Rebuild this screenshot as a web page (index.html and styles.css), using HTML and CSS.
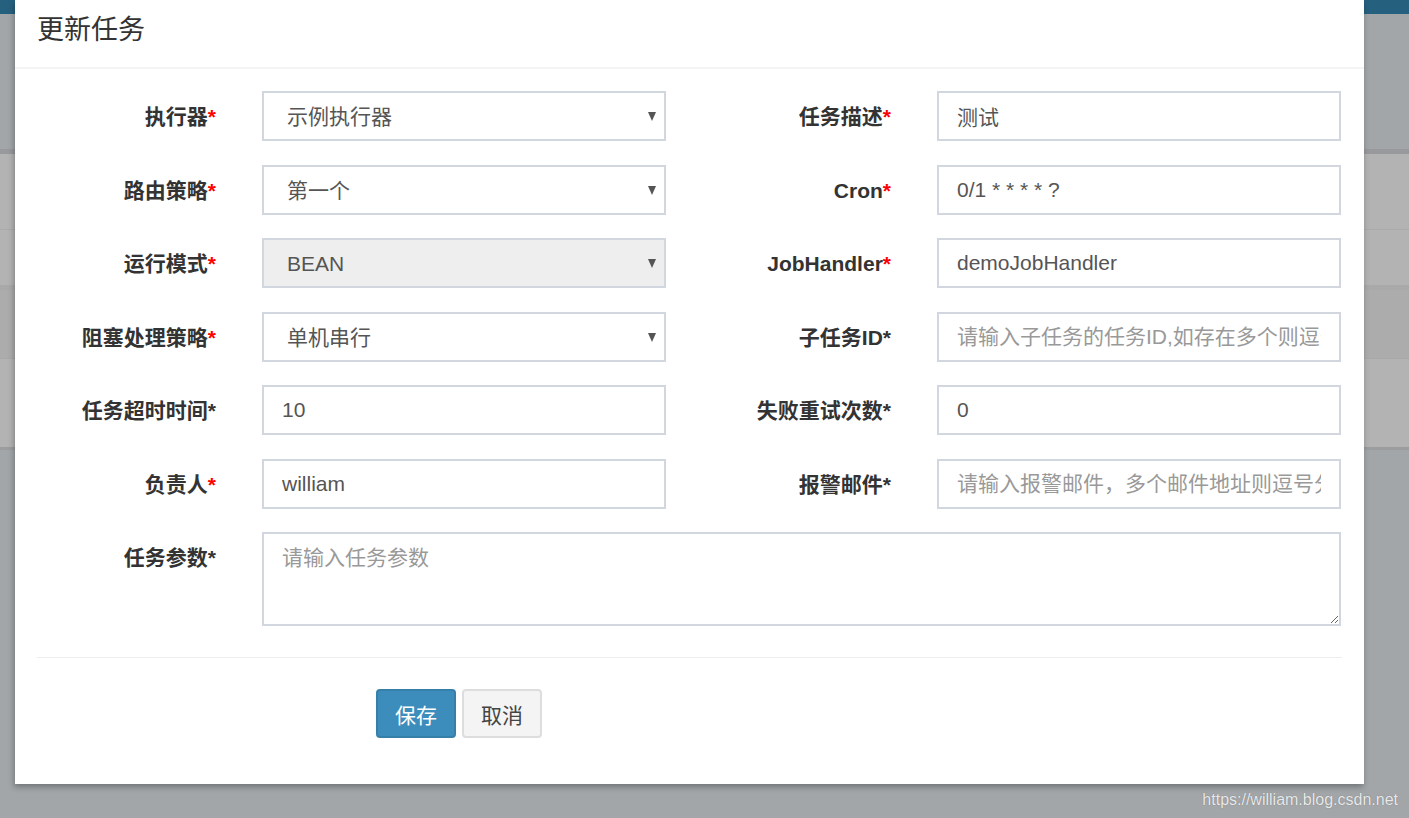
FILE: index.html
```html
<!DOCTYPE html>
<html lang="zh-CN">
<head>
<meta charset="utf-8">
<title>更新任务</title>
<link rel="stylesheet" href="styles.css">
</head>
<body>
<div class="page">
  <div class="topbar"></div>
  <div class="band"></div>
  <div class="thead"></div>
  <div class="trow r1"></div>
  <div class="trow r2"></div>
  <div class="trow r3"></div>
  <div class="trow r4"></div>
  <div class="tfoot"></div>
</div>

<div class="modal">
  <div class="modal-header">
    <h4 class="modal-title">更新任务</h4>
  </div>
  <div class="modal-body">
    <form class="form-grid">
      <label class="lbl">执行器<span class="req">*</span></label>
      <div class="sel-wrap">
        <select class="ctl sel"><option>示例执行器</option></select>
        <span class="caret"></span>
      </div>
      <label class="lbl">任务描述<span class="req">*</span></label>
      <input class="ctl" type="text" value="测试">

      <label class="lbl">路由策略<span class="req">*</span></label>
      <div class="sel-wrap">
        <select class="ctl sel"><option>第一个</option></select>
        <span class="caret"></span>
      </div>
      <label class="lbl">Cron<span class="req">*</span></label>
      <input class="ctl" type="text" value="0/1 * * * * ?">

      <label class="lbl">运行模式<span class="req">*</span></label>
      <div class="sel-wrap">
        <select class="ctl sel" disabled><option>BEAN</option></select>
        <span class="caret"></span>
      </div>
      <label class="lbl">JobHandler<span class="req">*</span></label>
      <input class="ctl" type="text" value="demoJobHandler">

      <label class="lbl">阻塞处理策略<span class="req">*</span></label>
      <div class="sel-wrap">
        <select class="ctl sel"><option>单机串行</option></select>
        <span class="caret"></span>
      </div>
      <label class="lbl">子任务ID*</label>
      <input class="ctl" type="text" placeholder="请输入子任务的任务ID,如存在多个则逗号分隔">

      <label class="lbl">任务超时时间*</label>
      <input class="ctl" type="text" value="10">
      <label class="lbl">失败重试次数*</label>
      <input class="ctl" type="text" value="0">

      <label class="lbl">负责人<span class="req">*</span></label>
      <input class="ctl" type="text" value="william">
      <label class="lbl">报警邮件*</label>
      <input class="ctl" type="text" placeholder="请输入报警邮件，多个邮件地址则逗号分隔">

      <label class="lbl">任务参数*</label>
      <textarea class="ctl area" placeholder="请输入任务参数"></textarea>
    </form>
    <hr class="divider">
    <div class="actions">
      <button type="button" class="btn btn-primary">保存</button>
      <button type="button" class="btn btn-default">取消</button>
    </div>
  </div>
</div>

<div class="watermark">https://william.blog.csdn.net</div>
</body>
</html>
```

FILE: styles.css
```css
* { box-sizing: border-box; }

html, body {
  margin: 0;
  padding: 0;
  width: 1409px;
  height: 818px;
  overflow: hidden;
}

body {
  font-family: "Liberation Sans", Arial, "Noto Sans CJK SC", sans-serif;
  background: #a3a6a9;
  position: relative;
}

/* dimmed page behind the modal */
.page { width: 100%; }
.topbar { height: 14px; background: #26607f; }
.band { height: 135px; background: #a3a6a9; }
.thead { height: 5px; background: #98999c; }
.trow { background: #b3b3b3; }
.r1 { height: 76px; border-bottom: 1px solid #aaaaaa; }
.r2 { height: 55px; }
.r3 { height: 74px; background: #acacac; border-top: 5px solid #a9a9a9; border-bottom: 1px solid #a8a8a8; }
.r4 { height: 88px; }
.tfoot { height: 3px; background: #9c9d9f; }

/* modal */
.modal {
  position: absolute;
  top: 0;
  left: 15px;
  width: 1349px;
  height: 784px;
  background: #fff;
  box-shadow: -1px 3px 6px rgba(0, 0, 0, 0.3);
}

.modal-header {
  height: 69px;
  padding: 8px 0 0 22px;
  border-bottom: 2px solid #f4f4f4;
}

.modal-title {
  margin: 0;
  font-family: "Noto Sans CJK SC", "Liberation Sans", sans-serif;
  font-weight: 400;
  font-size: 27px;
  line-height: 40px;
  color: #333;
}

.modal-body {
  padding: 22px 22px 46px;
}

.form-grid {
  display: grid;
  grid-template-columns: 179px 404px 179px 404px;
  grid-auto-rows: auto;
  column-gap: 46px;
  row-gap: 23.5px;
  margin: 0;
}

.lbl {
  text-align: right;
  font-weight: 700;
  font-size: 21px;
  line-height: 30px;
  padding-top: 11px;
  color: #333;
}

.req { color: #f00; }

.ctl {
  display: block;
  width: 100%;
  height: 50px;
  margin: 0;
  border: 2px solid #d2d6de;
  border-radius: 0;
  padding: 9px 18px;
  font-family: "Liberation Sans", Arial, "Noto Sans CJK SC", sans-serif;
  font-size: 21px;
  line-height: 30px;
  color: #555;
  background: #fff;
  outline: none;
}

.ctl::placeholder { color: #999; opacity: 1; }

.sel-wrap { position: relative; }

.sel {
  -webkit-appearance: none;
  appearance: none;
  padding-left: 23px;
}

.sel:disabled {
  background: #eeeeee;
  color: #555;
  opacity: 1;
}

.caret {
  position: absolute;
  right: 10px;
  top: 21px;
  width: 0;
  height: 0;
  border-left: 4.5px solid transparent;
  border-right: 4.5px solid transparent;
  border-top: 9px solid #555;
  pointer-events: none;
}

.area {
  grid-column: 2 / 5;
  height: 94px;
  resize: vertical;
}

.divider {
  border: 0;
  border-top: 1px solid #eeeeee;
  margin: 31px 0 31px;
}

.actions {
  display: flex;
  gap: 6px;
  padding-left: 339px;
}

.btn {
  height: 49px;
  padding: 0 17px;
  font-family: "Noto Sans CJK SC", "Liberation Sans", sans-serif;
  font-size: 21px;
  border-radius: 4px;
  border: 2px solid transparent;
  cursor: pointer;
}

.btn-primary {
  width: 80px;
  background: #3c8dbc;
  border-color: #367fa9;
  color: #fff;
}

.btn-default {
  width: 80px;
  background: #f4f4f4;
  border-color: #dddddd;
  color: #444;
}

.watermark {
  position: absolute;
  right: 11px;
  bottom: 9px;
  font-family: "Liberation Sans", Arial, sans-serif;
  font-size: 16px;
  color: #e9e9e9;
  text-shadow: 0 0 1px rgba(0, 0, 0, 0.35);
}
```
